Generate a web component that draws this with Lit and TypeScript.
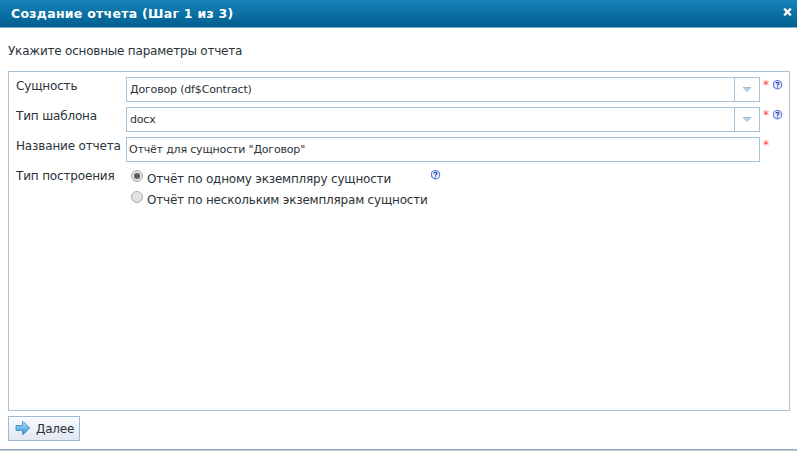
import { LitElement, html, css } from "lit";
import { customElement, property } from "lit/decorators.js";

@customElement("help-icon")
class HelpIcon extends LitElement {
  static styles = css`
    :host { display: block; width: 10px; height: 10px; }
    svg { display: block; }
  `;
  render() {
    return html`<svg width="10" height="10" viewBox="0 0 10 10">
      <circle cx="4.5" cy="4.7" r="4.2" fill="#e6ecfd" stroke="#5b78dc" stroke-width="1.1" />
      <path d="M3 3.6C3.1 2 6 2 6 3.6C6 4.6 4.5 4.5 4.5 5.7M4.5 6.4v1.1" fill="none" stroke="#2440a8" stroke-width="1.1" />
    </svg>`;
  }
}

@customElement("combo-box")
class ComboBox extends LitElement {
  @property() value = "";
  static styles = css`
    :host { display: flex; box-sizing: border-box; width: 634px; height: 25px; border: 1px solid #a3c3dd; background: #fff; }
    .text { flex: 1; padding-left: 3px; font-size: 11px; line-height: 24px; letter-spacing: -0.17px; white-space: nowrap; }
    .trigger { width: 25px; border-left: 1px solid #a3c3dd; display: flex; padding: 9px 0 0 8px; box-sizing: border-box; }
  `;
  render() {
    return html`<div class="text">${this.value}</div>
      <div class="trigger">
        <svg width="8" height="6" viewBox="0 0 8 6"><path d="M0 0H8V1L4.5 5H3.5L0 1Z" fill="#b5d0ea" /><path d="M0 .5H8" stroke="#a5b9c8" /></svg>
      </div>`;
  }
}

@customElement("app-root")
class AppRoot extends LitElement {
  static styles = css`
    :host {
      display: flex; flex-direction: column; box-sizing: border-box; width: 797px; height: 451px;
      overflow: hidden; background: #fff; color: #2b3338;
      font: 12px/16px "DejaVu Sans", Verdana, sans-serif;
    }
    .header {
      flex: none; height: 28px; box-sizing: border-box; border-bottom: 1px solid #7fafcf;
      background: linear-gradient(#1583b9, #025f8f); color: #fff; font-weight: bold;
      display: flex; justify-content: space-between; padding: 0 5px 0 11px; line-height: 27px;
    }
    .title { font-size: 12.5px; letter-spacing: 0.27px; }
    .close { margin-top: 8px; width: 9px; height: 8px; }
    .intro { flex: none; margin: 15px 0 0 8px; height: 28px; letter-spacing: -0.21px; }
    .panel {
      flex: none; margin-left: 8px; width: 782px; height: 340px; box-sizing: border-box;
      border: 1px solid #a3c3dd; padding: 5px 0 0 7px;
    }
    .row { display: flex; height: 30px; white-space: nowrap; }
    .label { width: 110px; flex: none; padding-top: 1px; letter-spacing: -0.16px; }
    .star { width: 9.5px; margin-left: 3px; color: #f44; line-height: 16px; }
    .help { margin-top: 3px; }
    .input {
      box-sizing: border-box; width: 634px; height: 25px; border: 1px solid #a3c3dd;
      font-size: 11px; line-height: 24px; padding-left: 2px; letter-spacing: -0.18px;
    }
    .options { width: 305px; flex: none; }
    .option { display: flex; height: 21px; padding-left: 5px; align-items: flex-start; letter-spacing: -0.2px; }
    .option span { margin-left: 4px; padding-top: 4px; }
    .radio {
      flex: none; width: 12px; height: 12px; box-sizing: border-box; margin-top: 3px; border: 1px solid #aaa; border-radius: 50%;
      background: linear-gradient(#e6e6e6, #dedede); display: flex; align-items: center; justify-content: center;
    }
    .dot { width: 6px; height: 6px; border-radius: 50%; background: #5e5e5e; }
    .button {
      flex: none; display: flex; box-sizing: border-box; width: 72px; height: 25px; margin: 5px 0 0 8px;
      border: 1px solid #9ab8d8; background: linear-gradient(#f8fafe, #e2e7f1); padding-left: 6px;
      line-height: 24px; letter-spacing: -0.2px;
    }
    .button svg { margin: 4px 5px 0 0; flex: none; }
    .footer { flex: none; margin-top: 8px; height: 2px; box-sizing: border-box; border-top: 1px solid #86a9da; background: #c4c4bf; }
  `;

  render() {
    return html`
      <div class="header">
        <span class="title">Создание отчета (Шаг 1 из 3)</span>
        <svg class="close" viewBox="0 0 9 8"><path d="M1.2 .7L7.8 7.3M7.8 .7L1.2 7.3" stroke="#fff" stroke-width="2.4" /></svg>
      </div>
      <div class="intro">Укажите основные параметры отчета</div>
      <div class="panel">
        <div class="row"><div class="label">Сущность</div><combo-box .value=${"Договор (df$Contract)"}></combo-box><div class="star">*</div><help-icon class="help"></help-icon></div>
        <div class="row"><div class="label">Тип шаблона</div><combo-box .value=${"docx"}></combo-box><div class="star">*</div><help-icon class="help"></help-icon></div>
        <div class="row"><div class="label">Название отчета</div><div class="input">Отчёт для сущности "Договор"</div><div class="star">*</div></div>
        <div class="row"><div class="label">Тип построения</div>
          <div class="options">
            <div class="option"><div class="radio"><div class="dot"></div></div><span>Отчёт по одному экземпляру сущности</span></div>
            <div class="option"><div class="radio"></div><span>Отчёт по нескольким экземплярам сущности</span></div>
          </div>
          <help-icon class="help"></help-icon>
        </div>
      </div>
      <div class="button">
        <svg width="16" height="15" viewBox="0 0 16 15">
          <defs><linearGradient id="arrow" x1="0" y1="0" x2="0" y2="1"><stop offset="0" stop-color="#b5e2fa" /><stop offset="1" stop-color="#2d91d8" /></linearGradient></defs>
          <path d="M1 4.5H7.5V.8H8.5L14.6 7L8.5 13.2H7.5V9.5H1Z" fill="url(#arrow)" stroke="#4a93c8" stroke-linejoin="round" />
        </svg><span>Далее</span>
      </div>
      <div class="footer"></div>
    `;
  }
}
